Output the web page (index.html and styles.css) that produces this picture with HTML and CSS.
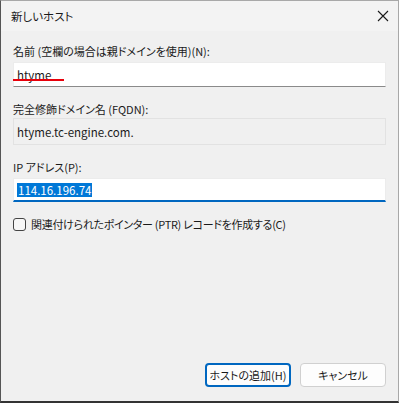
FILE: index.html
```html
<!DOCTYPE html>
<html lang="ja">
<head>
  <meta charset="UTF-8" />
  <title>新しいホスト</title>
  <link rel="stylesheet" href="styles.css">
</head>
<body>
  <div class="dialog">
    <div class="titlebar">
      <span class="title">新しいホスト</span>
      <svg class="close" width="12" height="12" viewBox="0 0 12 12">
        <path d="M1 1 L11 11 M11 1 L1 11" stroke="#1a1a1a" stroke-width="1.1" fill="none"/>
      </svg>
    </div>

    <div class="content">
      <label class="label">名前 (空欄の場合は親ドメインを使用)(N):</label>
      <div class="field">
        <span class="value">htyme</span>
        <span class="mark"></span>
      </div>

      <label class="label tight">完全修飾ドメイン名 (FQDN):</label>
      <div class="field readonly">
        <span class="value">htyme.tc-engine.com.</span>
      </div>

      <label class="label">IP アドレス(P):</label>
      <div class="field focused">
        <span class="value selected">114.16.196.74</span>
      </div>

      <div class="check">
        <span class="box"></span>
        <span class="check-text">関連付けられたポインター (PTR) レコードを作成する(C)</span>
      </div>
    </div>

    <div class="buttons">
      <button class="btn default">ホストの追加(H)</button>
      <button class="btn">キャンセル</button>
    </div>
  </div>
</body>
</html>
```

FILE: styles.css
```css
body {
  margin: 0;
  font-family: "Noto Sans CJK JP", "Noto Sans", sans-serif;
  font-size: 11px;
  font-feature-settings: "palt";
  color: #1a1a1a;
  background: #f0f0f0;
}
.dialog {
  width: 399px;
  height: 403px;
  box-sizing: border-box;
  border: 1px solid #a8a8a8;
  border-bottom: 2px solid #333;
  border-left-color: #555;
  background: #f0f0f0;
  display: flex;
  flex-direction: column;
}
.titlebar {
  height: 30px;
  display: flex;
  align-items: center;
  justify-content: space-between;
  padding: 0 8px 0 10px;
  background: #f3f3f3;
}
.title { font-size: 11.5px; }
.close { margin-right: 1px; }

.content {
  padding: 12px 12px 0 12px;
  display: flex;
  flex-direction: column;
}
.label {
  display: block;
  line-height: 16px;
  margin-bottom: 3px;
}
.label.tight { margin-bottom: 1px; }
.field {
  position: relative;
  height: 25px;
  box-sizing: border-box;
  background: #fff;
  border: 1px solid #ececec;
  border-bottom: 1px solid #8a8a8a;
  display: flex;
  align-items: center;
  padding-left: 3px;
  margin-bottom: 14px;
}
.field.readonly {
  background: #f0f0f0;
  border: 1px solid #e2e2e2;
  height: 27px;
}
.field.focused {
  height: 24px;
  border-bottom: 2px solid #0067c0;
}
.value {
  font-size: 11.5px;
  line-height: 14px;
}
.selected {
  background: #0078d7;
  color: #fff;
  padding: 0 1px;
}
.mark {
  position: absolute;
  left: -1px;
  top: 16px;
  width: 51px;
  height: 2px;
  background: #e8000b;
}
.check {
  display: flex;
  align-items: center;
  gap: 5px;
}
.check-text { letter-spacing: -0.3px; }
.box {
  width: 11px;
  height: 11px;
  border: 1px solid #444;
  border-radius: 3px;
  background: #f7f7f7;
}
.buttons {
  margin-top: auto;
  display: flex;
  justify-content: flex-end;
  gap: 9px;
  padding: 0 12px 14px 0;
}
.btn {
  width: 86px;
  height: 24px;
  font-family: inherit;
  font-size: 11px;
  font-feature-settings: "palt";
  white-space: nowrap;
  color: #1a1a1a;
  background: #fdfdfd;
  border: 1px solid #d0d0d0;
  border-radius: 4px;
  padding: 0;
}
.btn.default {
  border: 2px solid #0067c0;
}
```
